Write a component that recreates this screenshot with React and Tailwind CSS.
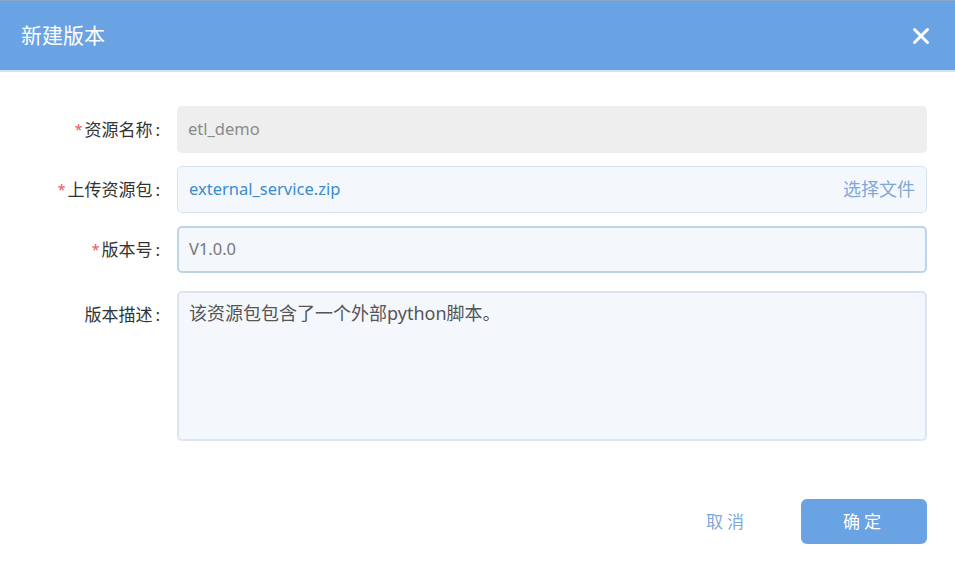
export default function App() {
  const font = { fontFamily: '"Noto Sans", "Noto Sans CJK SC", sans-serif' };
  const Star = () => <span className="text-[#e8545a] text-[14px] mr-[2px] relative top-[-1px]">*</span>;
  return (
    <div className="w-[955px] h-[582px] bg-white overflow-hidden" style={font}>
      <div className="h-[1px] bg-[#8aa6c8]" />
      <div className="h-[69px] bg-[#6aa3e3] flex items-center justify-between pl-[21px] pr-[25px]">
        <span className="text-white text-[21px] leading-none">新建版本</span>
        <svg width="18" height="18" viewBox="0 0 18 18">
          <path d="M2.5 2.5 L15.5 15.5 M15.5 2.5 L2.5 15.5" stroke="white" strokeWidth="3" strokeLinecap="round" />
        </svg>
      </div>
      <div className="h-[2px] bg-[#d4e4f6]" />
      <div className="pt-[34px] pr-[28px] flex flex-col">
        <div className="flex items-center h-[47px]">
          <div className="w-[160px] text-right text-[17px] text-[#333]"><Star />资源名称<span className="ml-[3px]">:</span></div>
          <div className="ml-[17px] flex-1 h-full rounded-[5px] bg-[#eeeeee] flex items-center px-[11px] text-[16.5px] text-[#8a8a8a]">etl_demo</div>
        </div>
        <div className="flex items-center h-[47px] mt-[13px]">
          <div className="w-[160px] text-right text-[17px] text-[#333]"><Star />上传资源包<span className="ml-[3px]">:</span></div>
          <div className="ml-[17px] flex-1 h-full rounded-[5px] bg-[#f4f8fc] border border-[#d6e4f1] flex items-center justify-between px-[11px] text-[16.5px]">
            <span className="text-[#3b8bd0]">external_service.zip</span>
            <span className="text-[#7ea8d8] text-[18px]">选择文件</span>
          </div>
        </div>
        <div className="flex items-center h-[47px] mt-[13px]">
          <div className="w-[160px] text-right text-[17px] text-[#333]"><Star />版本号<span className="ml-[3px]">:</span></div>
          <div className="ml-[17px] flex-1 h-full rounded-[5px] bg-[#f4f8fc] border-2 border-[#bdd3ea] flex items-center px-[10px] text-[16.5px] text-[#777]">V1.0.0</div>
        </div>
        <div className="flex items-start h-[150px] mt-[18px]">
          <div className="w-[160px] text-right text-[17px] text-[#333] pt-[11px]">版本描述<span className="ml-[3px]">:</span></div>
          <div className="ml-[17px] flex-1 h-full rounded-[5px] bg-[#f4f8fc] border-2 border-[#dae6f1] px-[10px] pt-[7px] text-[18px] text-[#555]">该资源包包含了一个外部python脚本。</div>
        </div>
        <div className="flex items-center justify-end mt-[58px]">
          <span className="text-[#7ea8d8] text-[17px] tracking-[4px] mr-[53px]">取消</span>
          <div className="w-[126px] h-[45px] rounded-[6px] bg-[#6aa3e3] flex items-center justify-center text-white text-[17px] tracking-[4px]">确定</div>
        </div>
      </div>
    </div>
  );
}
